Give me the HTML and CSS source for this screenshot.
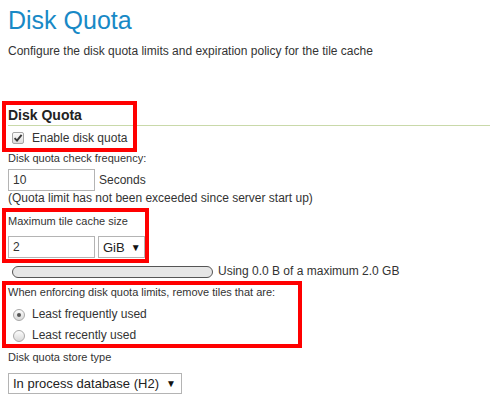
FILE: index.html
```html
<!DOCTYPE html>
<html>
<head>
<meta charset="utf-8">
<link rel="stylesheet" href="styles.css">
</head>
<body>
<div class="page">
  <h1 class="title">Disk Quota</h1>
  <p class="desc">Configure the disk quota limits and expiration policy for the tile cache</p>

  <h2 class="section">Disk Quota</h2>
  <label class="opt check-row">
    <span class="box"><svg width="10" height="10" viewBox="0 0 10 10"><path d="M1.6 5.2 L4 7.6 L8.6 1.8" fill="none" stroke="#3a3a3a" stroke-width="1.9"/></svg></span>
    Enable disk quota
  </label>

  <div class="lbl lbl-freq">Disk quota check frequency:</div>
  <div class="field-row row-freq">
    <span class="input">10</span><span class="unit">Seconds</span>
  </div>
  <div class="note">(Quota limit has not been exceeded since server start up)</div>

  <div class="lbl lbl-max">Maximum tile cache size</div>
  <div class="field-row row-max">
    <span class="input">2</span><span class="select sel-unit">GiB<span class="arrow">▼</span></span>
  </div>

  <div class="usage">
    <span class="bar"></span><span class="usage-text">Using 0.0 B of a maximum 2.0 GB</span>
  </div>

  <div class="lbl lbl-policy">When enforcing disk quota limits, remove tiles that are:</div>
  <label class="opt radio-row r1"><span class="radio on"></span>Least frequently used</label>
  <label class="opt radio-row r2"><span class="radio"></span>Least recently used</label>

  <div class="lbl lbl-store">Disk quota store type</div>
  <div class="field-row row-store">
    <span class="select sel-store">In process database (H2)<span class="arrow">▼</span></span>
  </div>

  <div class="mark mark-1"></div>
  <div class="mark mark-2"></div>
  <div class="mark mark-3"></div>
</div>
</body>
</html>
```

FILE: styles.css
```css
html, body {
  margin: 0;
  padding: 0;
  background: #fff;
}
body {
  font-family: "Liberation Sans", Arial, sans-serif;
  color: #333;
}
.page {
  position: relative;
  padding: 5px 0 0 8px;
  min-height: 398px;
}
.title {
  margin: 0;
  font-size: 25px;
  line-height: 30px;
  font-weight: normal;
  color: #1889c6;
}
.desc {
  margin: 8px 0 0;
  font-size: 12px;
  line-height: 16px;
}
.section {
  margin: 47px 0 0;
  font-size: 14px;
  line-height: 18px;
  font-weight: bold;
  color: #222;
  padding-bottom: 1px;
  border-bottom: 1px solid #c9d9a9;
}
.opt {
  display: flex;
  align-items: center;
  font-size: 12px;
}
.check-row {
  margin-top: 1px;
  height: 22px;
  line-height: 22px;
}
.box {
  width: 10px;
  height: 10px;
  margin: 0 8px 0 4px;
  border: 1px solid #a6a6a6;
  border-radius: 2px;
  background: linear-gradient(#fdfdfd, #dcdcdc);
  display: flex;
  align-items: center;
  justify-content: center;
}
.lbl {
  font-size: 11px;
  line-height: 14px;
}
.lbl-freq { margin-top: 2px; }
.lbl-max { margin-top: 8px; }
.lbl-policy { margin-top: 7px; }
.lbl-store { margin-top: 4px; }
.field-row {
  display: flex;
  align-items: center;
}
.row-freq { margin-top: 4px; height: 22px; }
.row-max { margin-top: 8px; height: 22px; }
.row-store { margin-top: 9px; height: 21px; }
.input {
  box-sizing: border-box;
  width: 87px;
  height: 22px;
  border: 1px solid #b4b4b4;
  font-size: 12px;
  line-height: 20px;
  padding-left: 4px;
  color: #333;
}
.unit {
  margin-left: 4px;
  font-size: 12px;
}
.note {
  font-size: 12px;
  line-height: 15px;
}
.select {
  box-sizing: border-box;
  border: 1px solid #b4b4b4;
  font-size: 13px;
  color: #222;
  display: flex;
  align-items: center;
  background: #fff;
}
.sel-unit {
  margin-left: 3px;
  width: 47px;
  height: 22px;
  padding-left: 4px;
}
.sel-store {
  width: 174px;
  height: 21px;
  padding-left: 4px;
}
.arrow {
  font-size: 10px;
  margin-left: 6px;
  color: #111;
}
.sel-store .arrow { margin-left: 7px; }
.usage {
  margin-top: 6px;
  display: flex;
  align-items: flex-start;
  height: 14px;
  line-height: 14px;
  font-size: 12px;
}
.bar {
  box-sizing: border-box;
  margin: 2px 0 0 4px;
  width: 201px;
  height: 12px;
  border: 1px solid #555;
  border-radius: 6px;
  background: #e6e6e6;
}
.usage-text {
  margin-left: 5px;
}
.radio-row {
  height: 21px;
  line-height: 21px;
}
.r1 { margin-top: 5px; }
.radio {
  box-sizing: border-box;
  width: 12px;
  height: 12px;
  margin: 0 7px 0 5px;
  border: 1px solid #a8a8a8;
  border-radius: 50%;
  background: linear-gradient(#fcfcfc, #d8d8d8);
  display: flex;
  align-items: center;
  justify-content: center;
}
.radio.on::after {
  content: "";
  width: 4px;
  height: 4px;
  border-radius: 50%;
  background: #555;
}
.mark {
  position: absolute;
  border: 4px solid #f00;
  box-sizing: border-box;
  pointer-events: none;
}
.mark-1 { left: 2px; top: 101px; width: 135px; height: 51px; }
.mark-2 { left: 2px; top: 208px; width: 147px; height: 55px; }
.mark-3 { left: 2px; top: 281px; width: 300px; height: 67px; }
```
